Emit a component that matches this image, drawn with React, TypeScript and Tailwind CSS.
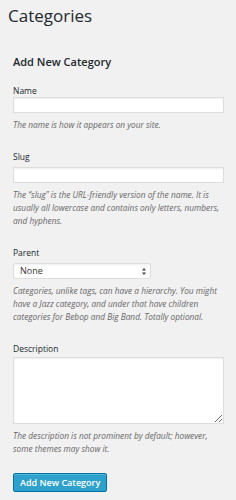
import React from 'react';

const Help: React.FC<{ children: React.ReactNode }> = ({ children }) => (
  <p className="mt-[5px] text-[8.3px] leading-[13px] italic text-[#666]">{children}</p>
);

const Label: React.FC<{ children: React.ReactNode }> = ({ children }) => (
  <label className="block text-[8.5px] leading-[11px] text-[#23282d]">{children}</label>
);

export default function App() {
  return (
    <div
      className="min-h-[500px] w-[236px] bg-[#f1f1f1] text-[#444]"
      style={{ fontFamily: '"Open Sans", "Liberation Sans", sans-serif' }}
    >
      <h1 className="pl-[8px] pt-[5px] text-[17px] leading-[22px] font-normal text-[#23282d]">Categories</h1>

      <div className="px-[13px]">
        <h2 className="mt-[28px] text-[11px] leading-[14px] font-semibold text-[#23282d]">Add New Category</h2>

        <div className="mt-[16px]">
          <Label>Name</Label>
          <input
            type="text"
            className="mt-[1px] block h-[16px] w-[211px] border border-[#ddd] bg-white shadow-[inset_0_1px_2px_rgba(0,0,0,0.07)] outline-none"
          />
          <Help>The name is how it appears on your site.</Help>
        </div>

        <div className="mt-[20px]">
          <Label>Slug</Label>
          <input
            type="text"
            className="mt-[5px] block h-[16px] w-[211px] border border-[#ddd] bg-white shadow-[inset_0_1px_2px_rgba(0,0,0,0.07)] outline-none"
          />
          <Help>
            The “slug” is the URL-friendly version of the name. It is usually all lowercase and contains only
            letters, numbers, and hyphens.
          </Help>
        </div>

        <div className="mt-[20px]">
          <Label>Parent</Label>
          <div className="relative mt-[5px] flex h-[16px] w-[138px] items-center rounded-[2px] border border-[#ddd] bg-white pl-[6px] shadow-[inset_0_1px_2px_rgba(0,0,0,0.07)]">
            <span className="text-[9px] leading-[14px] text-[#333]">None</span>
            <svg className="absolute right-[4px] top-[4px]" width="4" height="7" viewBox="0 0 4 7">
              <path d="M2 0 L4 2.6 H0 Z" fill="#444" />
              <path d="M2 7 L4 4.4 H0 Z" fill="#444" />
            </svg>
          </div>
          <Help>
            Categories, unlike tags, can have a hierarchy. You might have a Jazz category, and under that have
            children categories for Bebop and Big Band. Totally optional.
          </Help>
        </div>

        <div className="mt-[20px]">
          <Label>Description</Label>
          <textarea className="mt-[3px] block h-[67px] w-[211px] border border-[#ddd] bg-white shadow-[inset_0_1px_2px_rgba(0,0,0,0.07)] outline-none" />
          <Help>The description is not prominent by default; however, some themes may show it.</Help>
        </div>

        <button
          type="button"
          className="mt-[18px] h-[19px] rounded-[2px] border border-[#0074a2] bg-[#2ea2cc] px-[6px] text-[9px] leading-[17px] font-semibold text-white shadow-[inset_0_1px_0_rgba(120,200,230,0.5)]"
        >
          Add New Category
        </button>
      </div>
    </div>
  );
}
